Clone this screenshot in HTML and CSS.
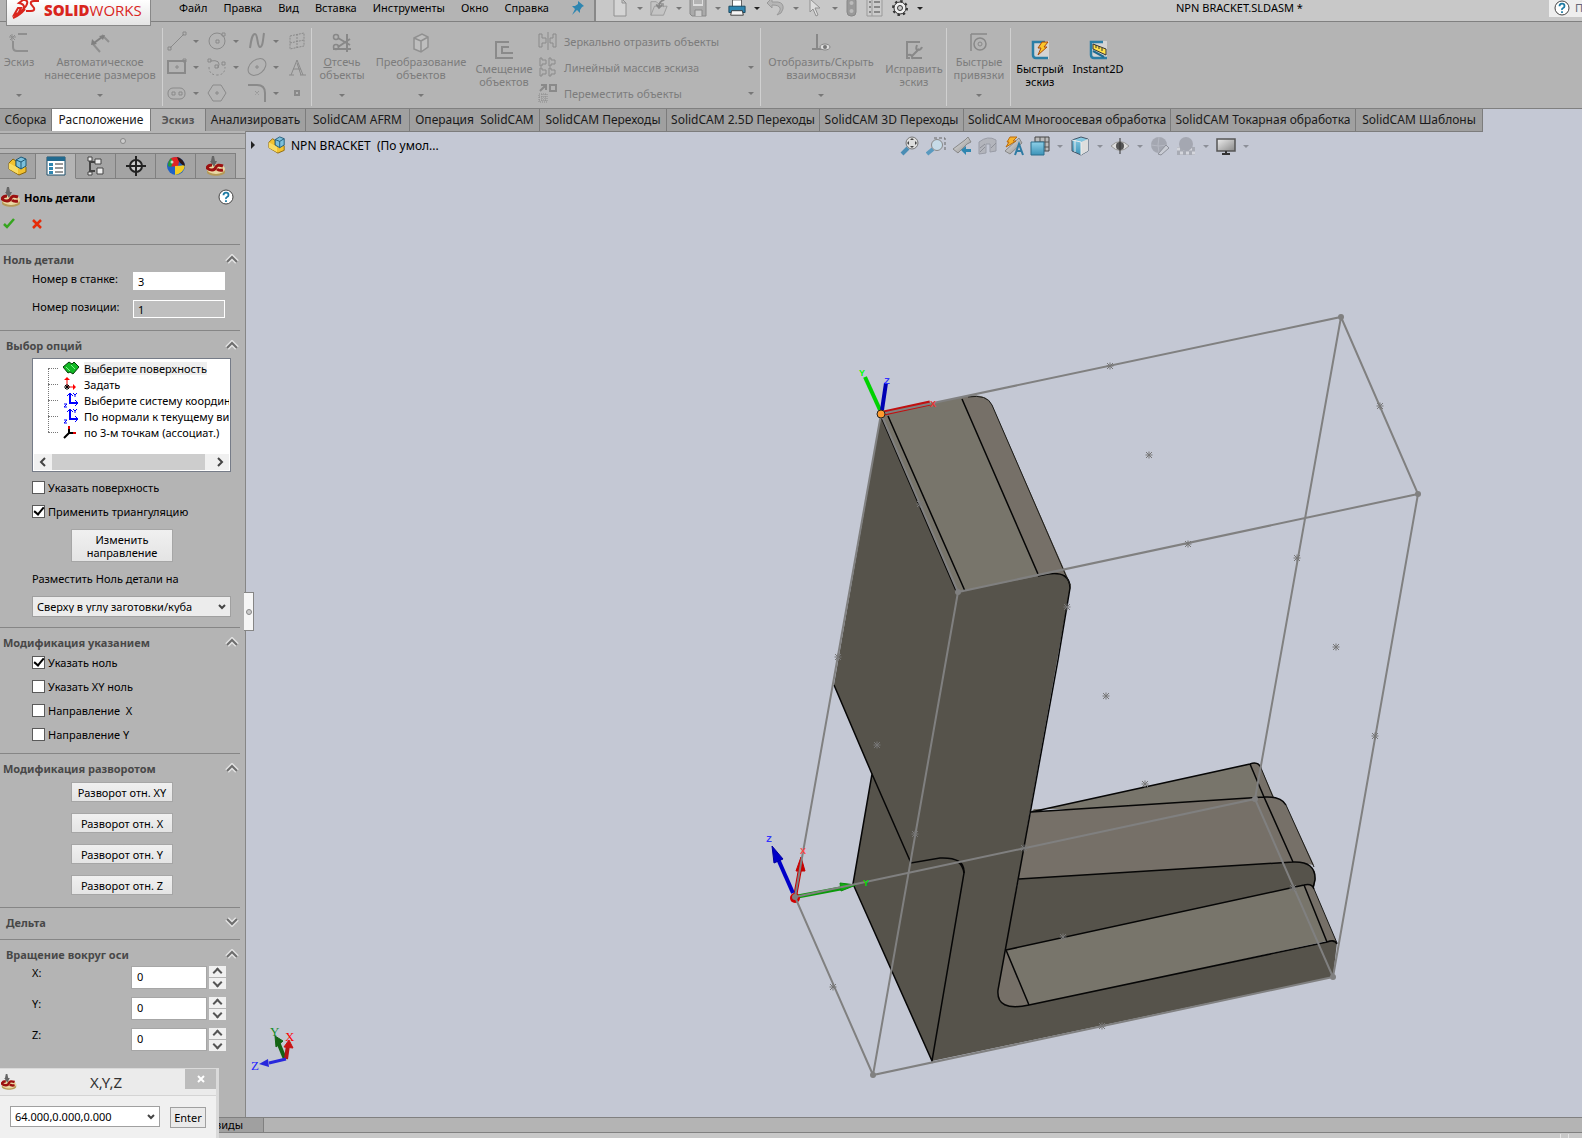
FILE: index.html
```html
<!DOCTYPE html>
<html lang="ru">
<head>
<meta charset="utf-8">
<title>NPN BRACKET.SLDASM</title>
<link rel="stylesheet" href="styles.css">
</head>
<body>
<svg class="defs" aria-hidden="true">
  <defs>
    <linearGradient id="steel" x1="0" y1="0" x2="1" y2="1"><stop offset="0" stop-color="#eee"/><stop offset="1" stop-color="#888"/></linearGradient>
    <linearGradient id="sky" x1="0" y1="0" x2="0" y2="1"><stop offset="0" stop-color="#8fd0e8"/><stop offset="1" stop-color="#3b93b8"/></linearGradient>
  </defs>
  <symbol id="zero" viewBox="0 0 20 20"><path d="M1 13v3c0 5 18 5 18 0v-3z" fill="#b59a58"/><ellipse cx="10" cy="13" rx="9" ry="5" fill="#ead9a4"/><path d="M17 10q-6-2-7 1t-4 3-5-2q1-3 5-3" fill="none" stroke="#9b1010" stroke-width="3"/><path d="M11 13q2 2 6 1" fill="none" stroke="#9b1010" stroke-width="3"/><path d="M6 0h2l1 5h2l-3 6-4-6h1z" fill="#666"/></symbol>
  <symbol id="asm" viewBox="0 0 20 20"><path d="M1 7l4-4 3 2v5l8-1 2 2v5l-7 3-10-6z" fill="#f2c230" stroke="#8b6508"/><path d="M1 7l9 5v6L1 13z" fill="#f9dc62"/><path d="M8 4l5-3 5 2v7l-5 3-5-3z" fill="#7cc0dc" stroke="#1d5877"/><path d="M8 4l5 2 5-3M13 6v7" fill="none" stroke="#1d5877"/></symbol>
  <symbol id="help" viewBox="0 0 16 16"><circle cx="8" cy="8" r="7" fill="#fff" stroke="#444"/><path d="M5.500 6.300q0-2.600 2.500-2.600t2.500 2.300q0 1.300-1.400 2T8 10M8 11.200v1.800" fill="none" stroke="#1c7aa3" stroke-width="1.800"/></symbol>
  <symbol id="up" viewBox="0 0 14 10"><path d="M2 8l5-5 5 5" fill="none" stroke="#e2e2e2" stroke-width="5"/><path d="M2 8l5-5 5 5" fill="none" stroke="#6d6d6d" stroke-width="2"/></symbol>
  <symbol id="down" viewBox="0 0 14 10"><path d="M2 2l5 5 5-5" fill="none" stroke="#e2e2e2" stroke-width="5"/><path d="M2 2l5 5 5-5" fill="none" stroke="#6d6d6d" stroke-width="2"/></symbol>
  <symbol id="star" viewBox="-4 -4 8 8"><path d="M-3.500 0h7M0-3.500v7M-3-3l6 6M3-3l-6 6" stroke="#777" fill="none"/></symbol>
  <symbol id="axes" viewBox="0 0 16 16"><path d="M7 2v9h7" stroke="#00f" stroke-width="2" fill="none"/><path d="M4 4l3-3 3 3M12 8l3 3-3 3M10 1l2 2 2-2M12 3v2M1 12h3l-3 3h3" stroke="#00f" fill="none"/></symbol>
</svg>

<header class="titlebar">
  <div class="menu">
    <div class="logo">
      <svg width="28" height="22" viewBox="0 0 28 22"><path d="M11 0h2q4 1 1 6-4 6-12 9l4-7h3l-2 4q5-2 5-5t-5-4zM27 1h-5q-4 0-3 3l3 4q1 3-3 3h-5M1 18Q8 15 13 9" fill="none" stroke="#d9251d" stroke-width="2"/></svg>
      <span><b>SOLID</b>WORKS</span>
    </div>
    <nav>
      <a href="#">Файл</a><a href="#">Правка</a><a href="#">Вид</a><a href="#">Вставка</a><a href="#">Инструменты</a><a href="#">Окно</a><a href="#">Справка</a>
    </nav>
    <svg class="pin" width="14" height="16" viewBox="0 0 14 16"><path d="M7 1l6 5-2 1-2 3 0 3-3-3-5 5 3-6-3-3 3 0 3-2z" fill="#2f86b0"/></svg>
  </div>
  <div class="quick">
    <button aria-label="Создать"><svg width="18" height="18" viewBox="0 0 18 18"><path d="M3 0h8l4 4v13H3zM11 0v4h4" fill="#d4d4d4" stroke="#909090"/></svg><i></i></button>
    <button aria-label="Открыть"><svg width="18" height="18" viewBox="0 0 20 18"><path d="M1 17V2h6l2 2h6v4M1 17l4-10h14l-4 10z" fill="#c4c4c4" stroke="#999"/><path d="M16 0q-6 1-6 8m-3-3l3 4 4-4" fill="none" stroke="#888" stroke-width="2"/></svg><i></i></button>
    <button aria-label="Сохранить"><svg width="18" height="18" viewBox="0 0 18 18"><path d="M1 0h16v17H3l-2-2z" fill="#aaa" stroke="#888"/><path d="M4 0h10v7H4z" fill="#ddd"/><path d="M5 2h8M5 4h8M6 17v-6h7v6" stroke="#888" fill="#ccc"/></svg><i></i></button>
    <button aria-label="Печать" class="on"><svg width="18" height="18" viewBox="0 0 20 18"><path d="M5 0h10v8H5z" fill="#fff" stroke="#555"/><path d="M1 7h18v7H1z" fill="#2f86b0" stroke="#16445c"/><path d="M4 12h12l1 5H3z" fill="#f5f5f5" stroke="#333"/></svg><i></i></button>
    <button aria-label="Отменить"><svg width="18" height="18" viewBox="0 0 18 18"><path d="M5 3h6q6 1 5 7-1 5-6 6 4-5 3-7-1-3-8-3v3L0 4l5-5z" fill="#b5b5b5" stroke="#999"/></svg><i></i></button>
    <button aria-label="Выбрать"><svg width="18" height="18" viewBox="0 0 18 18"><path d="M4 0l10 9H9l3 7-2 1-3-7-3 3z" fill="#ddd" stroke="#909090"/></svg><i></i></button>
    <button aria-label="Перестроить"><svg width="14" height="18" viewBox="0 0 12 18"><rect x="1" y="-2" width="9" height="19" rx="4" fill="#999" stroke="#888"/><circle cx="5.500" cy="4" r="2" fill="#bbb"/><circle cx="5.500" cy="12" r="2" fill="#bbb"/></svg></button>
    <button aria-label="Свойства"><svg width="18" height="18" viewBox="0 0 18 18"><path d="M1 0h15v17H1zM6 0v17" fill="#ccc" stroke="#999"/><path d="M3 3h2M3 8h2M3 13h2M8 3h6M8 8h6M8 13h6" stroke="#888" stroke-width="2"/></svg></button>
    <button aria-label="Параметры" class="on"><svg width="18" height="18" viewBox="-9 -9 18 18"><circle r="6" fill="#eee" stroke="#333"/><circle r="7" fill="none" stroke="#333" stroke-width="2" stroke-dasharray="2.500 3"/><circle r="5" fill="#eee"/><circle r="2.500" fill="#ccc" stroke="#333"/></svg><i></i></button>
    <h1>NPN BRACKET.SLDASM *</h1>
    <div class="search"><svg width="16" height="16"><use href="#help"/></svg><span>П</span></div>
  </div>
</header>

<section class="ribbon">
  <button class="tool w38"><svg width="20" height="20" viewBox="0 0 20 20"><path d="M4 8v6q0 4 4 4h11M9 1h9" fill="none" stroke="#8f8f8f" stroke-width="2"/><path d="M3 1v7M0 4h7M1 2l5 5M6 2L1 7" stroke="#8f8f8f"/></svg><span>Эскиз</span><i></i></button>
  <button class="tool w124"><svg width="20" height="20" viewBox="0 0 20 20"><path d="M12 2l7 7M3 11l7 8" fill="none" stroke="#8f8f8f" stroke-width="2"/><path d="M4 10l8-6" stroke="#808080" stroke-width="2"/><path d="M1 12l1-6 5 5zM15 2L9 3l4 4z" fill="#808080"/></svg><span>Автоматическое<br>нанесение размеров</span><i></i></button>
  <div class="grid">
    <button aria-label="Линия"><svg width="20" height="20" viewBox="0 0 20 20"><path d="M3 17L17 3"/><path d="M1 16h3v3H1zM16 1h3v3h-3z"/></svg><i></i></button>
    <button aria-label="Окружность"><svg width="20" height="20" viewBox="0 0 20 20"><circle cx="10" cy="10" r="8"/><path d="M9 9h3v3H9zM15 2h3v3h-3z"/></svg><i></i></button>
    <button aria-label="Сплайн"><svg width="20" height="20" viewBox="0 0 20 20"><path d="M3 17C4 10 5 3 8 3s2 13 5 13 3-8 4-14" stroke-width="2"/></svg><i></i></button>
    <button aria-label="Плоскость"><svg width="20" height="20" viewBox="0 0 20 20"><path d="M3 5l14-3v13L3 18zM10 3v14M3 12l14-3" stroke-dasharray="2 1"/></svg></button>
    <button aria-label="Прямоугольник"><svg width="20" height="20" viewBox="0 0 20 20"><path d="M1 4h17v12H1z" stroke-width="2"/><path d="M9 9h2v2H9zM16 2h3v3h-3z"/></svg><i></i></button>
    <button aria-label="Дуга"><svg width="20" height="20" viewBox="0 0 20 20"><path d="M3 4q12-2 8 7M1 2h3v3H1zM8 8h3v3H8zM15 5h3v3h-3z"/><path d="M2 10q0 8 8 8t8-8" stroke-dasharray="2 2"/></svg><i></i></button>
    <button aria-label="Эллипс"><svg width="20" height="20" viewBox="0 0 20 20"><ellipse cx="10" cy="10" rx="10" ry="7" transform="rotate(-40 10 10)"/><path d="M9 9h2v2H9z"/></svg><i></i></button>
    <button aria-label="Текст"><svg width="20" height="20" viewBox="0 0 20 20"><path d="M4 18L10 3l6 15M6 12h8M2 18h5M13 18h6M10 6l4 12"/></svg></button>
    <button aria-label="Прорезь"><svg width="20" height="20" viewBox="0 0 20 20"><rect x="1" y="5" width="17" height="11" rx="5"/><path d="M5 9h3v3H5zM12 9h3v3h-3z"/></svg><i></i></button>
    <button aria-label="Многоугольник"><svg width="20" height="20" viewBox="0 0 20 20"><path d="M6 2h8l5 8-5 8H6l-5-8z"/><path d="M9 9h2v2H9z"/></svg></button>
    <button aria-label="Скругление"><svg width="20" height="20" viewBox="0 0 20 20"><path d="M1 2h9q8 0 8 8v9" stroke-width="2"/><path d="M8 8l4 4M12 8l-4 4" stroke-dasharray="1 1"/></svg><i></i></button>
    <button aria-label="Точка"><svg width="20" height="20" viewBox="0 0 20 20"><path d="M8 8h4v4H8z" stroke-width="2"/></svg></button>
  </div>
  <button class="tool w60"><svg width="20" height="20" viewBox="0 0 20 20"><path d="M15 1v18M1 16h18M6 5l12 7M6 14l12-8" stroke="#888" stroke-width="2"/><circle cx="4" cy="4" r="2.500" fill="none" stroke="#888" stroke-width="1.500"/><circle cx="4" cy="14" r="2.500" fill="none" stroke="#888" stroke-width="1.500"/></svg><span><u>О</u>тсечь<br>объекты</span><i></i></button>
  <button class="tool w98"><svg width="20" height="20" viewBox="0 0 20 20"><path d="M3 5l8-4 6 3v10l-7 5-7-3zM3 5l7 3v11M10 8l7-4" fill="#bebebe" stroke="#909090" stroke-width="1.500"/></svg><span>Преобразование<br>объектов</span><i></i></button>
  <button class="tool low w68"><svg width="20" height="20" viewBox="0 0 20 20"><path d="M15 2H2v16h17M15 7H8v6h11" fill="none" stroke="#8a8a8a" stroke-width="2"/></svg><span>Смещение<br>объектов</span></button>
  <div class="rows">
    <button><svg width="20" height="20" viewBox="0 0 20 20"><path d="M1 3h3v4h4v5H4v4H1zM18 3h-3v4h-3v5h3v4h3zM10 1v18"/></svg><span>Зеркально отразить объекты</span></button>
    <button><svg width="20" height="20" viewBox="0 0 20 20"><path d="M2 1h2v2h4v4H4v2H2zM11 1h2v2h4v4h-4v2h-2zM2 11h2v2h4v4H4v2H2zM11 11h2v2h4v4h-4v2h-2z"/></svg><span>Линейный массив эскиза</span><i></i></button>
    <button><svg width="20" height="20" viewBox="0 0 20 20"><path d="M2 8l5-5M3 2h5v5M12 2h6v6h-6z" stroke-width="2"/><path d="M1 11h8v8H1zM4 11v8M7 11v8M1 14h8M1 17h8" stroke-dasharray="1 1"/></svg><span>Переместить объекты</span><i></i></button>
  </div>
  <button class="tool w120"><svg width="20" height="20" viewBox="0 0 20 20"><path d="M6 1v15M1 16h12" stroke="#888" stroke-width="2"/><ellipse cx="14" cy="14" rx="5" ry="3" fill="#ddd" stroke="#888"/><circle cx="14" cy="14" r="2" fill="#777"/></svg><span>Отобразить/Скрыть<br>взаимосвязи</span><i></i></button>
  <button class="tool low w66 line"><svg width="20" height="20" viewBox="0 0 20 20"><path d="M16 2H3v16h3" fill="none" stroke="#8a8a8a" stroke-width="2"/><path d="M8 16l7-7M13 5q-2 5 1 5t4-3M4 15q5-1 4 4M9 18h9" fill="none" stroke="#888" stroke-width="2"/></svg><span>Исправить<br>эскиз</span></button>
  <button class="tool w64 line"><svg width="20" height="20" viewBox="0 0 20 20"><path d="M2 1h16M2 1v17" stroke="#888" stroke-width="1.500"/><circle cx="11" cy="11" r="6" fill="none" stroke="#888" stroke-width="1.500"/><circle cx="11" cy="11" r="2" fill="none" stroke="#888"/></svg><span>Быстрые<br>привязки</span><i></i></button>
  <button class="tool low on w58"><svg width="20" height="20" viewBox="0 0 20 20"><path d="M2 1h17v18H4l-2-2z" fill="#d4d4d4"/><path d="M15 2H3v13q0 3 3 3h12" fill="none" stroke="#2a7ea6" stroke-width="2.500"/><path d="M12 2h6l-4 5h3l-9 8 3-7H8z" fill="#fbc52b" stroke="#a8480c"/></svg><span>Быстрый<br>эскиз</span></button>
  <button class="tool low on w58"><svg width="20" height="20" viewBox="0 0 20 20"><path d="M2 1h17v18H4l-2-2z" fill="#d4d4d4"/><path d="M15 2H3v13q0 3 3 3h13" fill="none" stroke="#2a7ea6" stroke-width="2.500"/><path d="M5 4l13 5v6L5 9z" fill="#ffe14a" stroke="#333"/><path d="M8 5v3M11 6v3M14 8v3" stroke="#333"/><path d="M5 11l11 6" stroke="#1f6b90" stroke-width="2"/></svg><span>Instant2D</span></button>
</section>

<nav class="tabs">
  <a href="#">Сборка</a><a href="#" class="white">Расположение</a><a href="#" class="active">Эскиз</a><a href="#">Анализировать</a><a href="#">SolidCAM AFRM</a><a href="#">Операция&nbsp; SolidCAM</a><a href="#">SolidCAM Переходы</a><a href="#">SolidCAM 2.5D Переходы</a><a href="#">SolidCAM 3D Переходы</a><a href="#">SolidCAM Многоосевая обработка</a><a href="#">SolidCAM Токарная обработка</a><a href="#">SolidCAM Шаблоны</a>
</nav>

<main>
  <aside>
    <div class="grip"><b></b></div>
    <div class="ptabs">
      <button aria-label="Дерево"><svg width="20" height="20"><use href="#asm"/></svg></button>
      <button aria-label="Свойства" class="sel"><svg width="20" height="20" viewBox="0 0 20 20"><path d="M1 1h18v18H1z" fill="#fff" stroke="#1c4f6b"/><path d="M1 1h18v4H1z" fill="#226a8f"/><path d="M3 7h4v3H3zM3 11h4v3H3zM3 15h4v3H3z" fill="#2f86b0"/><path d="M9 8h8M9 12h8M9 16h8" stroke="#333"/></svg></button>
      <button aria-label="Конфигурации"><svg width="20" height="20" viewBox="0 0 20 20"><path d="M4 2v15M4 6h5M4 15h5" stroke="#444" stroke-width="2"/><path d="M2 1h4v4H2zM2 16h4v3H2zM9 3h6v5H9zM11 12h6v6h-6z" fill="#eee" stroke="#444"/></svg></button>
      <button aria-label="Размеры"><svg width="20" height="20" viewBox="0 0 20 20"><circle cx="10" cy="10" r="6" fill="#ccc" stroke="#222" stroke-width="2"/><path d="M10 0v20M0 10h20" stroke="#222" stroke-width="2"/></svg></button>
      <button aria-label="Внешний вид"><svg width="20" height="20" viewBox="0 0 20 20"><circle cx="10" cy="10" r="9" fill="#1f63c6"/><path d="M5 2q6-2 9 0l-2 8q-6 1-10 0 0-5 3-8z" fill="#e02424"/><path d="M2 10q0-5 3-8l2 4-2 5z" fill="#1b9c3f"/><path d="M9 10q5 0 10-1-1 8-10 10z" fill="#f2cc22"/><path d="M11 1q7 2 8 9-6-2-8-9z" fill="#2b1717"/><circle cx="6" cy="6" r="1.500" fill="#fff" opacity=".7"/></svg></button>
      <button aria-label="SolidCAM"><svg width="20" height="20"><use href="#zero"/></svg></button>
    </div>
    <div class="ptitle"><svg width="20" height="20"><use href="#zero"/></svg><h2>Ноль детали</h2><svg width="16" height="16"><use href="#help"/></svg></div>
    <div class="confirm">
      <button aria-label="OK"><svg width="12" height="12" viewBox="0 0 12 12"><path d="M1 6l3 3 7-8" fill="none" stroke="#35a51e" stroke-width="2.500"/></svg></button>
      <button aria-label="Отмена"><svg width="12" height="12" viewBox="0 0 12 12"><path d="M2 2l8 8M10 2l-8 8" stroke="#e62b08" stroke-width="2.500"/></svg></button>
    </div>

    <section class="zero">
      <h3>Ноль детали<svg width="14" height="10"><use href="#up"/></svg></h3>
      <div class="field"><label for="n1">Номер в станке:</label><input id="n1" value="3"></div>
      <div class="field"><label for="n2">Номер позиции:</label><input id="n2" value="1" class="ro" readonly></div>
    </section>

    <section class="opts">
      <h3 class="in">Выбор опций<svg width="14" height="10"><use href="#up"/></svg></h3>
      <div class="tree">
        <ul>
          <li><svg width="16" height="16" viewBox="0 0 16 16"><path d="M0 7l6-5 3 2 2-2 5 5-6 7-3-2-2 1z" fill="#12b824" stroke="#033c08"/><path d="M3 7l4 4M8 5l4 4" stroke="#7cf58a"/></svg><span class="hl">Выберите поверхность</span></li>
          <li><svg width="16" height="16" viewBox="0 0 16 16"><path d="M4 11V2M4 11h8" stroke="#f00"/><path d="M1 4l3-3 3 3zM10 8l3 3-3 3z" fill="#f00"/><path d="M1 11h6M4 8v6M2 9l4 4M6 9l-4 4" stroke="#000"/></svg><span>Задать</span></li>
          <li><svg width="16" height="16"><use href="#axes"/></svg><span>Выберите систему координат</span></li>
          <li><svg width="16" height="16"><use href="#axes"/></svg><span>По нормали к текущему виду</span></li>
          <li><svg width="16" height="16" viewBox="0 0 16 16"><path d="M6 3v6h7M6 9l-5 5" fill="none" stroke="#000" stroke-width="2"/><path d="M5 2h2v3H5zM10 8h3v2h-3z" fill="#d00"/></svg><span>по 3-м точкам (ассоциат.)</span></li>
        </ul>
        <div class="scroll"><svg width="8" height="10" viewBox="0 0 8 10"><path d="M6 1L2 5l4 4" fill="none" stroke="#444" stroke-width="2"/></svg><b></b><svg width="8" height="10" viewBox="0 0 8 10"><path d="M2 1l4 4-4 4" fill="none" stroke="#444" stroke-width="2"/></svg></div>
      </div>
      <label class="check"><input type="checkbox">Указать поверхность</label>
      <label class="check"><input type="checkbox" checked>Применить триангуляцию</label>
      <button class="btn tall">Изменить<br>направление</button>
      <label class="lab" for="place">Разместить Ноль детали на</label>
      <select id="place"><option>Сверху в углу заготовки/куба</option></select>
    </section>

    <section class="pick">
      <h3>Модификация указанием<svg width="14" height="10"><use href="#up"/></svg></h3>
      <label class="check"><input type="checkbox" checked>Указать ноль</label>
      <label class="check"><input type="checkbox">Указать XY ноль</label>
      <label class="check"><input type="checkbox">Направление&nbsp; X</label>
      <label class="check"><input type="checkbox">Направление Y</label>
    </section>

    <section class="turn">
      <h3>Модификация разворотом<svg width="14" height="10"><use href="#up"/></svg></h3>
      <button class="btn">Разворот отн. XY</button>
      <button class="btn">Разворот отн. X</button>
      <button class="btn">Разворот отн. Y</button>
      <button class="btn">Разворот отн. Z</button>
    </section>

    <section class="delta"><h3 class="in">Дельта<svg width="14" height="10"><use href="#down"/></svg></h3></section>

    <section class="rot">
      <h3 class="in">Вращение вокруг оси<svg width="14" height="10"><use href="#up"/></svg></h3>
      <div class="spin"><label for="rx">X:</label><input id="rx" value="0"><span><button aria-label="X больше"></button><button aria-label="X меньше"></button></span></div>
      <div class="spin"><label for="ry">Y:</label><input id="ry" value="0"><span><button aria-label="Y больше"></button><button aria-label="Y меньше"></button></span></div>
      <div class="spin"><label for="rz">Z:</label><input id="rz" value="0"><span><button aria-label="Z больше"></button><button aria-label="Z меньше"></button></span></div>
    </section>
    <div class="handle"><b></b></div>
  </aside>

  <div class="view">
    <svg class="scene" viewBox="246 131 1336 986" preserveAspectRatio="xMinYMin slice">
      <g stroke-linejoin="round">
        <path d="M1031 812L1250 764q8-3 11 4l13 29v12h-240z" fill="#78756b"/>
        <path d="M1250 764q8-3 11 4l12 29h-9z" fill="#767068"/>
        <path d="M1031 812L1264 797q17-1 22 8l28 60-21-3-280 20z" fill="#767068"/>
        <path d="M1019 879L1293 862q17-1 22 10 2 10-3 20L1000 955z" fill="#56534b"/>
        <path d="M1006 950L1304 885l23 56L1029 1006l-35-6z" fill="#78756b"/>
        <path d="M1304 885q8-2 10 4l23 54-10-2z" fill="#767068"/>
        <path d="M1006 950l24 58h-20l-14-8v-30z" fill="#767068"/>
        <path d="M881 414L962 397q24-5 30 8l78 178q2 4-1 8L958 592z" fill="#78756b"/>
        <path d="M962 397q24-5 30 8l78 178v6l-32-14z" fill="#767068"/>
        <path d="M881 414L958 592l90-18q22-3 22 14L998 990q-2 22 31 15L1327 942h10l-4 35L932 1061 853 884l19-110-38-89z" fill="#56534b"/>
      </g>
      <g fill="none" stroke="#060606" stroke-width="1.500">
        <path d="M882 419l75 174M888 416l77 175M962 399l76 175M1038 576l10-2q22-3 22 14L1058 660 998 990q-2 22 31 15L1327 942q8-3 10 2M834 685l38 89-19 110 79 177 32-188q1-16-24-15l-29 5-39-89"/>
        <path d="M958 862q5 4 6 11M1031 812L1250 764q8-3 11 4M1250 764l14 33 29 65M1031 812L1264 797q17-1 22 8M1019 879L1293 862q23-1 22 18l-2 8M1006 950L1304 885q8-2 10 4M1304 885l23 57M1006 950l23 55"/>
      </g>
      <path d="M968 397q19-3 24 8l78 180M1261 768l12 29M1286 805l28 62M1314 889l23 54" fill="none" stroke="#1a1a18"/>
      <path d="M884 413l46-10" stroke="#c01010" stroke-width="5"/>
      <path d="M795 897l5-28" stroke="#c80000" stroke-width="4"/><path d="M796 871l5-14 4 14z" fill="#c80000" stroke="#c80000"/>
      <path d="M795 897l48-9" stroke="#0a9a0a" stroke-width="4"/><path d="M840 883l16 2-15 6z" fill="#0fae0f" stroke="#0a8a0a"/>
      <path d="M793 893l-15-34" stroke="#0000c8" stroke-width="4"/><path d="M772 846l11 13-9 4z" fill="#0000c8" stroke="#0000a0"/>
      <circle cx="795" cy="898" r="5" fill="#d00000"/>
      <g fill="none" stroke="#808080" stroke-width="2">
        <path d="M881 414L1341 317 1418 494 958 592zM795 897L1255 799 1333 977 873 1075zM881 414L795 897M1341 317l-86 482M1418 494l-85 483M958 592l-85 483"/>
      </g>
      <g fill="#808080"><circle cx="1341" cy="317" r="3"/><circle cx="1418" cy="494" r="3"/><circle cx="958" cy="592" r="3"/><circle cx="1333" cy="977" r="3"/><circle cx="873" cy="1075" r="3"/><circle cx="1255" cy="799" r="3"/><circle cx="795" cy="897" r="3"/></g>
      <g>
        <use href="#star" x="1106" y="362" width="8" height="8"/><use href="#star" x="1376" y="402" width="8" height="8"/><use href="#star" x="1145" y="451" width="8" height="8"/><use href="#star" x="1184" y="540" width="8" height="8"/><use href="#star" x="1293" y="554" width="8" height="8"/><use href="#star" x="1063" y="603" width="8" height="8"/><use href="#star" x="1332" y="643" width="8" height="8"/><use href="#star" x="1102" y="692" width="8" height="8"/><use href="#star" x="1371" y="732" width="8" height="8"/><use href="#star" x="834" y="653" width="8" height="8"/><use href="#star" x="873" y="741" width="8" height="8"/><use href="#star" x="911" y="830" width="8" height="8"/><use href="#star" x="1141" y="780" width="8" height="8"/><use href="#star" x="1020" y="844" width="8" height="8"/><use href="#star" x="1289" y="884" width="8" height="8"/><use href="#star" x="1059" y="933" width="8" height="8"/><use href="#star" x="1098" y="1022" width="8" height="8"/><use href="#star" x="829" y="983" width="8" height="8"/><use href="#star" x="916" y="500" width="8" height="8"/>
      </g>
      <path d="M880 410l-15-33" stroke="#00d200" stroke-width="4"/><path d="M882 410l4-27" stroke="#0000b4" stroke-width="4"/>
      <circle cx="881" cy="414" r="4" fill="#ff9a2e" stroke="#222"/>
      <path d="M285 1059l-7-17" stroke="#146414" stroke-width="4"/><path d="M275 1036l8 5-7 6z" fill="#146414" stroke="#146414"/>
      <path d="M286 1059l2-14" stroke="#b41414" stroke-width="4"/><path d="M289 1040l4 8-9-1z" fill="#c81414" stroke="#c81414"/>
      <path d="M286 1059l-17 4" stroke="#2828dc" stroke-width="3"/><path d="M259 1064l9-5 1 8z" fill="#2828dc"/>
      <g class="ax">
        <text x="862" y="376" fill="#0f0">Y</text><text x="887" y="384" fill="#33f">Z</text><text x="933" y="407" fill="#e33">X</text>
        <text x="769" y="842" fill="#33f">Z</text><text x="803" y="854" fill="#f44">X</text><text x="866" y="886" fill="#0d0">Y</text>
      </g>
      <g class="ax serif"><text x="270" y="1036" fill="#148c28">Y</text><text x="285" y="1041" fill="#f00">X</text><text x="251" y="1070" fill="#22f">Z</text></g>
    </svg>
    <div class="bar">
      <b class="tri"></b><svg width="18" height="18"><use href="#asm"/></svg><span>NPN BRACKET&nbsp; (По умол...</span>
    </div>
    <div class="hud">
      <button aria-label="Во весь экран"><svg width="20" height="20" viewBox="0 0 20 20"><path d="M2 18l6-6" stroke="#4a8db4" stroke-width="4"/><circle cx="12" cy="7" r="6" fill="#ddd" stroke="#777"/><path d="M12 2l2 2h-4zM12 12l2-2h-4zM7 7l2-2v4zM17 7l-2-2v4z" fill="#444"/></svg></button>
      <button aria-label="Область"><svg width="20" height="20" viewBox="0 0 20 20"><path d="M8 2h11v12" fill="none" stroke="#666" stroke-dasharray="3 2"/><path d="M1 18l6-5" stroke="#5a9abf" stroke-width="4"/><circle cx="11" cy="9" r="5.500" fill="#c6dbe8" stroke="#888"/></svg></button>
      <button aria-label="Предыдущий вид"><svg width="20" height="20" viewBox="0 0 20 20"><path d="M1 13L13 4l3-3 3 5-4 2-9 9z" fill="url(#steel)" stroke="#888"/><path d="M19 13h-5v-3l-5 4 5 5v-3h5z" fill="#2f86b0"/></svg></button>
      <button aria-label="Сечение"><svg width="20" height="20" viewBox="0 0 20 20"><path d="M1 6q9-7 17-2v11l-6 1V8H8v9l-7 1z" fill="#b3b5bc" stroke="#999ca6"/><path d="M2 12l5-4M2 16l5-5M13 12l5-5" stroke="#8e9098"/></svg></button>
      <button aria-label="Динамический вид"><svg width="20" height="20" viewBox="0 0 20 20"><path d="M1 15L15 2l3 5L6 18z" fill="url(#steel)" stroke="#888"/><path d="M6 1h7L9 5h3L2 11l3-5H3z" fill="#f7b32b" stroke="#b96b0e"/><path d="M11 19l4-11 4 11M12 15h5" fill="none" stroke="#2f7ba3" stroke-width="2"/></svg></button>
      <button class="dd" aria-label="Ориентация"><svg width="20" height="20" viewBox="0 0 20 20"><path d="M5 1h14v14H5z" fill="#bbb" stroke="#444"/><path d="M10 1v14M15 1v14M5 6h14M5 11h14" stroke="#555"/><path d="M1 6h13v13H1z" fill="url(#sky)" stroke="#2d6f8d"/></svg><i></i></button>
      <button class="dd" aria-label="Стиль отображения"><svg width="20" height="20" viewBox="0 0 20 20"><path d="M2 4l9-3 7 2v12l-7 4-9-4z" fill="url(#sky)" stroke="#456"/><path d="M11 6l7-3v12l-7 4z" fill="#ddd"/><path d="M5 4v12M2 4l9 2v13" fill="none" stroke="#eee"/></svg><i></i></button>
      <button class="dd" aria-label="Скрыть"><svg width="20" height="20" viewBox="0 0 20 20"><path d="M1 10q9-9 18 0-9 9-18 0z" fill="#ddd" stroke="#999"/><circle cx="10" cy="10" r="4" fill="#555"/><path d="M10 2v16" stroke="#333"/></svg><i></i></button>
      <button aria-label="Внешний вид"><svg width="20" height="20" viewBox="0 0 20 20"><circle cx="9" cy="9" r="8" fill="#a4a7b1"/><path d="M1 9q8 2 16 0M9 1q-2 8 0 16" fill="none" stroke="#b5b8c2"/><path d="M8 18l8-9 3 3-8 7z" fill="#c9ccd4" stroke="#8e919a"/></svg></button>
      <button class="dd" aria-label="Сцена"><svg width="20" height="20" viewBox="0 0 20 20"><path d="M1 11h18v8H1z" fill="#a8abb4"/><path d="M1 13h18M4 17h16" stroke="#d4d6dc" stroke-width="3" stroke-dasharray="3 3"/><circle cx="10" cy="8" r="7" fill="#a4a7b1"/></svg><i></i></button>
      <button class="dd" aria-label="Параметры вида"><svg width="20" height="20" viewBox="0 0 20 20"><path d="M1 3h18v12H1z" fill="url(#steel)" stroke="#555" stroke-width="1.500"/><path d="M10 15v3M6 18h8" stroke="#333" stroke-width="2"/></svg><i></i></button>
    </div>
  </div>
</main>

<footer>
  <div class="sheets"><a href="#">3D виды</a></div>
  <div class="status"><b></b><b></b></div>
</footer>

<div class="dialog" role="dialog" aria-label="X,Y,Z">
  <div class="dhead"><svg width="16" height="16"><use href="#zero"/></svg><span>X,Y,Z</span><button aria-label="Закрыть"><svg width="8" height="8" viewBox="0 0 8 8"><path d="M1 1l6 6M7 1L1 7" stroke="#fff" stroke-width="2"/></svg></button></div>
  <div class="dbody"><select aria-label="Координаты"><option>64.000,0.000,0.000</option></select><button>Enter</button></div>
</div>
</body>
</html>
```
FILE: styles.css
```css
* { box-sizing: border-box; }
body { margin: 0; min-height: 100vh; display: flex; flex-direction: column; background: #c4c8d4; font: 11px/13px "Noto Sans", "Open Sans", sans-serif; color: #000; position: relative; overflow-x: hidden; }
button, input, select { font: inherit; color: inherit; margin: 0; padding: 0; border: 0; background: none; border-radius: 0; }
a { color: inherit; text-decoration: none; }
h1, h2, h3, ul { margin: 0; padding: 0; font-size: inherit; list-style: none; }
svg { flex: none; display: block; }
.defs { position: absolute; width: 0; height: 0; }
i { width: 0; height: 0; flex: none; border: 3px solid transparent; border-top-color: #777; border-bottom: 0; }

.titlebar { display: flex; height: 22px; background: #c8c8c8; border-bottom: 1px solid #808080; position: relative; z-index: 2; line-height: 15px; }
.menu { display: flex; width: 596px; flex: none; background: #b4b4b4; border-right: 2px solid #888; align-items: flex-start; padding-left: 6px; }
.logo { width: 145px; height: 26px; flex: none; display: flex; align-items: flex-start; gap: 4px; padding-left: 5px; background: linear-gradient(#fff, #e4e4e4); border: 1px solid #888; border-top: 0; color: #d9251d; font: 15px/20px "Open Sans", sans-serif; }
.logo b { font-weight: 800; }
.menu nav { display: flex; gap: 16px; margin-left: 28px; }
.pin { margin-left: auto; margin-right: 9px; }
.quick { flex: 1; display: flex; align-items: flex-start; padding-left: 15px; }
.quick button { display: flex; align-items: center; gap: 8px; margin-right: 7px; height: 16px; }
.quick .on i { border-top-color: #222; }
.quick h1 { font-weight: normal; flex: 1; padding-left: 246px; white-space: nowrap; }
.search { width: 33px; height: 17px; background: #eee; display: flex; gap: 5px; padding-left: 5px; color: #667; overflow: hidden; }

.ribbon { display: flex; height: 87px; background: #b4b4b4; border-bottom: 1px solid #808080; color: #7c7c7c; }
.tool { display: flex; flex-direction: column; align-items: center; position: relative; padding-top: 11px; white-space: nowrap; flex: none; }
.tool span { margin-top: 2px; }
.tool i { margin-top: auto; margin-bottom: 11px; }
.tool.low { padding-top: 18px; }
.tool.on { color: #000; }
.line::after { content: ""; position: absolute; right: 0; top: 6px; bottom: 2px; border-right: 1px solid #d0d0d0; }
.w38 { width: 38px; }
.w124 { width: 124px; }
.w60 { width: 60px; }
.w98 { width: 98px; }
.w66 { width: 66px; }
.w68 { width: 68px; }
.w120 { width: 120px; }
.w64 { width: 64px; }
.w58 { width: 58px; }
.grid { width: 150px; border: solid #d0d0d0; border-width: 0 1px; display: grid; grid-template-columns: repeat(4, 40px); grid-template-rows: repeat(3, 26px); margin: 6px 0 2px; padding-left: 4px; overflow: hidden; flex: none; }
.grid button, .rows button { display: flex; align-items: center; gap: 6px; }
.grid svg, .rows svg { fill: none; stroke: #8a8a8a; }
.rows { width: 223px; flex: none; display: grid; grid-template-rows: repeat(3, 26px); margin: 6px 0 2px; padding-right: 6px; border-right: 1px solid #d0d0d0; }
.rows i { margin-left: auto; }

.tabs { display: grid; grid-template-columns: 52px 99px 55px 100px 104px 130px 127px 153px 144px 207px 185px 127px; height: 22px; font-size: 12px; }
.tabs a { background: #a0a0a0; border-right: 1px solid #7c7c7c; border-bottom: 1px solid #7c7c7c; text-align: center; line-height: 22px; color: #1a1a1a; white-space: nowrap; }
.tabs .white { background: #fff; }
.tabs .active { background: #b4b4b4; color: #555; font-weight: bold; font-size: 11px; border-bottom-color: #b4b4b4; }

main { flex: 1; display: flex; }
aside { width: 246px; flex: none; background: #b4b4b4; border-right: 1px solid #868686; position: relative; }
.grip { height: 16px; margin-top: 2px; border: solid #868686; border-width: 1px 0; display: flex; align-items: center; justify-content: center; }
.grip b, .handle b { width: 6px; height: 6px; border: 1px solid #888; border-radius: 3px; background: #ccc; }
.ptabs { display: flex; margin-top: 4px; height: 26px; border-bottom: 1px solid #808080; }
.ptabs button { width: 40px; height: 26px; display: flex; align-items: center; justify-content: center; border: 1px solid #808080; border-left: 0; background: #a4a4a4; }
.ptabs button:first-child { width: 36px; }
.ptabs .sel { background: #b4b4b4; border-bottom-color: #b4b4b4; }
.ptitle { display: flex; align-items: center; gap: 3px; height: 36px; padding: 0 11px 0 1px; }
.ptitle h2 { flex: 1; }
.confirm { display: flex; gap: 16px; padding-left: 3px; height: 29px; align-items: flex-start; padding-top: 3px; }
aside section { width: 240px; border-top: 1px solid #868686; display: flex; flex-direction: column; padding: 7px 0 0 32px; }
h3 { display: flex; justify-content: space-between; align-items: center; height: 14px; margin-left: -29px; padding-right: 1px; color: #484848; }
h3.in { margin-left: -26px; }
.zero { height: 86px; }
.field { display: flex; justify-content: space-between; padding-right: 15px; height: 28px; align-items: flex-start; }
.zero h3 { margin-bottom: 6px; }
.field input { width: 92px; height: 18px; background: #fff; padding-left: 5px; }
.field .ro { background: #bfbfbf; border: 1px solid #fff; padding-left: 4px; }
.opts { height: 297px; }
.tree { width: 199px; height: 114px; margin-top: 6px; background: #fff; border: 1px solid #767c88; padding: 1px; display: flex; flex-direction: column; }
.tree ul { height: 94px; padding-left: 14px; overflow: hidden; }
.tree li { display: flex; align-items: center; height: 16px; white-space: nowrap; gap: 5px; position: relative; }
.tree li::before { content: ""; width: 10px; flex: none; border-top: 1px dotted #777; }
.tree li:not(:last-child)::after { content: ""; position: absolute; left: 0; top: 8px; height: 16px; border-left: 1px dotted #777; }
.hl { background: #efefef; }
.scroll { display: flex; align-items: center; height: 16px; background: #f0f0f0; padding: 0 5px; gap: 5px; }
.scroll b { width: 153px; height: 16px; background: #cdcdcd; margin-right: auto; }
.check { display: flex; align-items: center; gap: 3px; height: 24px; white-space: nowrap; }
.check input { appearance: none; width: 13px; height: 13px; background: #fff; border: 1px solid #5a5a5a; display: grid; place-items: center; }
.check input:checked::after { content: ""; width: 4px; height: 8px; border: solid #000; border-width: 0 2px 2px 0; rotate: 40deg; margin-top: -2px; }
.tree + .check { margin-top: 3px; }
.btn { width: 102px; height: 20px; margin: 0 0 11px 39px; background: linear-gradient(#f0f0f0, #e4e4e4); border: 1px solid #a6a6a6; flex: none; white-space: nowrap; }
.tall { height: 33px; margin: 6px 0 10px 39px; }
select { appearance: none; background: #ececec url("data:image/svg+xml,%3Csvg xmlns='http://www.w3.org/2000/svg' width='8' height='6'%3E%3Cpath d='M1 1l3 3 3-3' fill='none' stroke='%23444' stroke-width='2'/%3E%3C/svg%3E") no-repeat right 4px center; border: 1px solid #a0a0a0; padding-left: 4px; }
#place { width: 199px; height: 21px; margin-top: 11px; }
.pick { height: 126px; }
.pick h3 { margin-bottom: 1px; }
.turn { height: 154px; }
.turn h3 { margin-bottom: 7px; }
.delta { height: 32px; }
.rot h3 { margin-bottom: 5px; }
.spin { display: flex; height: 31px; align-items: flex-start; }
.spin label { width: 99px; }
.spin input { width: 76px; height: 23px; background: #fff; border: 1px solid #a6a6a6; padding: 0 0 2px 5px; }
.spin span { display: grid; gap: 1px; margin-left: 2px; }
.spin span button { width: 17px; height: 11px; background: #f0f0f0; display: grid; place-items: center; }
.spin span button::after { content: ""; width: 5px; height: 5px; border: solid #555; border-width: 2px 0 0 2px; rotate: 45deg; margin-top: 2px; }
.spin span button:last-child::after { rotate: 225deg; margin-top: -3px; }
.handle { position: absolute; right: -9px; top: 461px; width: 10px; height: 39px; background: #f6f6f6; border: 1px solid #868686; border-left: 0; display: flex; align-items: center; justify-content: center; z-index: 2; }

.view { flex: 1; position: relative; overflow: hidden; min-height: 400px; }
.scene { position: absolute; inset: 0; width: 100%; height: 100%; }
.ax { font: bold 9px "Liberation Sans", sans-serif; text-anchor: middle; }
.serif { font: 13px "Liberation Serif", serif; text-anchor: start; }
.bar { position: absolute; left: 5px; top: 5px; display: flex; align-items: center; gap: 5px; font-size: 12px; }
.tri { border: 4px solid transparent; border-left-color: #222; border-right: 0; margin-right: 8px; }
.hud { position: absolute; left: 654px; top: 5px; display: flex; gap: 6px; }
.hud button { display: flex; align-items: center; gap: 7px; width: 20px; }
.hud .dd { width: 34px; }
.hud i { border-top-color: #8c8f98; }

footer { background: #c8c8c8; }
.sheets { height: 16px; background: #b4b4b4; border: solid #808080; border-width: 1px 0; }
.sheets a { display: block; width: 264px; height: 14px; background: #a0a0a0; border-right: 1px solid #808080; text-align: right; padding-right: 20px; }
.status { height: 5px; display: flex; justify-content: flex-end; gap: 7px; padding: 1px 13px 0 0; }
.status b { width: 1px; background: #e4e4e4; }

.dialog { position: absolute; left: 0; bottom: 0; width: 219px; height: 70px; background: #f0f0f0; border: solid #dadada; border-width: 1px 3px 0 0; z-index: 3; }
.dhead { display: flex; height: 27px; background: #ebebeb; border-bottom: 1px solid #d4d4d4; padding-left: 1px; align-items: flex-start; }
.dhead svg { margin-top: 5px; }
.dhead span { flex: 1; text-align: center; font-size: 15px; line-height: 26px; padding-left: 10px; color: #333; }
.dhead button { width: 31px; height: 20px; background: #bcbcbc; display: flex; justify-content: center; }
.dhead button svg { margin-top: 6px; }
.dbody { display: flex; gap: 10px; padding: 10px 0 0 10px; }
.dbody select { width: 150px; height: 21px; background-color: #fff; }
.dbody button { width: 36px; height: 21px; border: 1px solid #a0a0a0; background: #eaeaea; margin-top: 1px; }
```
